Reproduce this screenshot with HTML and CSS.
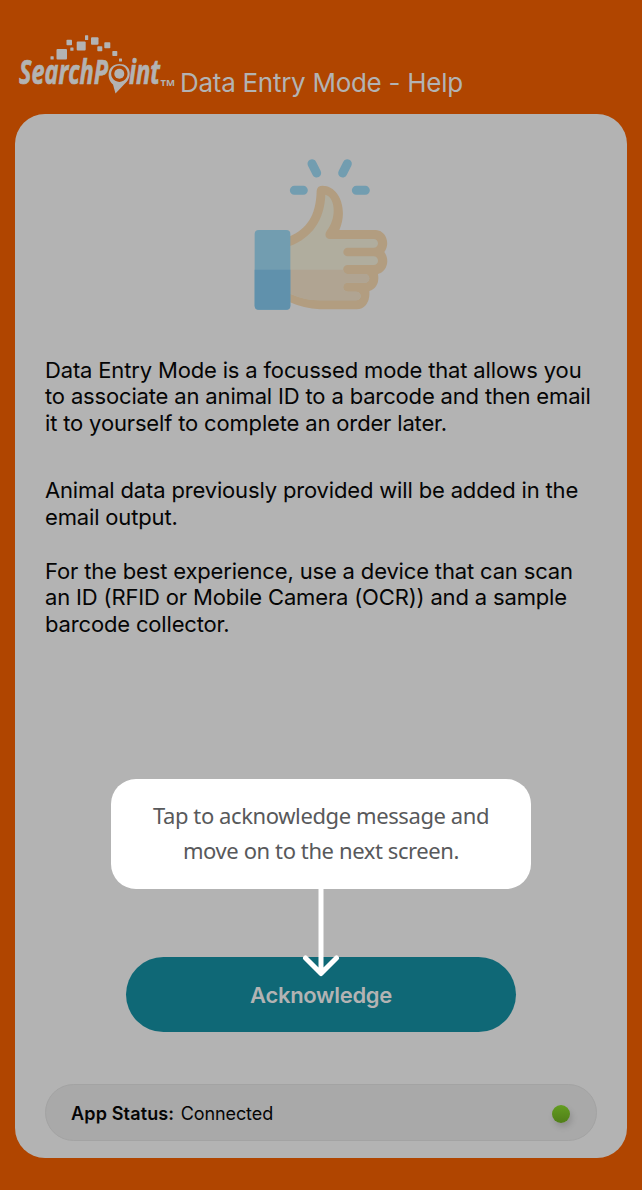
FILE: index.html
```html
<!DOCTYPE html>
<html lang="en">
<head>
<meta charset="utf-8">
<title>Data Entry Mode - Help</title>
<link rel="stylesheet" href="styles.css">
</head>
<body>
<div class="screen">
  <header class="header">
    <svg class="logo" viewBox="0 0 168 70" role="img" aria-label="SearchPoint">
      <g fill="#b3b3b3">
        <rect x="42.500" y="19" width="10.500" height="10.500" rx="1"/>
        <rect x="36.500" y="26.300" width="3.200" height="3.200" rx=".5"/>
        <rect x="52.500" y="9.700" width="5.500" height="5.500" rx=".8"/>
        <rect x="56.300" y="17.500" width="3.200" height="3.200" rx=".5"/>
        <rect x="62.700" y="11.500" width="9" height="9" rx="1"/>
        <rect x="71" y="5.300" width="3.200" height="4.600" rx=".5"/>
        <rect x="77" y="7.300" width="7.500" height="7.500" rx="1"/>
        <rect x="83.300" y="16.300" width="5" height="5" rx=".8"/>
        <rect x="90.300" y="12.300" width="6" height="6" rx=".8"/>
        <rect x="98.300" y="21" width="5" height="5" rx=".8"/>
        <rect x="105" y="28.500" width="3" height="3" rx=".5"/>
        <text class="logo-word" x="5" y="53.500" textLength="89" lengthAdjust="spacingAndGlyphs">SearchP</text>
        <text class="logo-word" x="115" y="53.500" textLength="31" lengthAdjust="spacingAndGlyphs">int</text>
        <text class="logo-tm" x="146.500" y="55.500" textLength="14.500" lengthAdjust="spacingAndGlyphs">TM</text>
        <circle cx="105.300" cy="43.700" r="5"/>
        <path fill-rule="evenodd" d="M101.500 63.500L99 54.500C92 49 93 34 105.300 34C118 34 118.500 48 110.500 54ZM105.300 35.500a8.200 8.200 0 1 0 .1 0Z"/>
      </g>
    </svg>
    <h1 class="title">Data Entry Mode - Help</h1>
  </header>
  <main class="card">
    <svg class="thumb" viewBox="0 0 480 525" aria-hidden="true">
      <g stroke="#729db0" stroke-width="27" stroke-linecap="round">
        <path d="M216 56L230 84M322 56L308 84M163 136H190M349 136H376"/>
      </g>
      <path fill="#b29d80" d="M150 274C200 250 228 215 230 138Q231 122 248 122C296 122 326 190 298 255H408C438 257 452 295 433 321C451 346 440 381 414 387C418 412 410 430 388 438C391 470 375 493 350 493H240Q190 490 150 472Z"/>
      <path fill="#b0ad9e" d="M150 303C216 278 253 225 256 149C284 155 293 215 260 258C252 270 258 282 270 282H401a13 13 0 0 1 0 26H323a13 13 0 0 0 0 26H401a13 13 0 0 1 0 26H323a13 13 0 0 0 0 27H375a13 13 0 0 1 0 26H323a13 13 0 0 0 0 27H349a13 13 0 0 1 0 26H240Q195 466 150 446Z"/>
      <path fill="#b0a492" d="M150 374H310A13 13 0 0 0 323 387H375a13 13 0 0 1 0 26H323a13 13 0 0 0 0 27H349a13 13 0 0 1 0 26H240Q195 466 150 446Z"/>
      <rect x="44" y="255" width="107" height="239" rx="12" fill="#729db0"/>
      <path fill="#6091ac" d="M44 374H151V482Q151 494 139 494H56Q44 494 44 482Z"/>
    </svg>
    <div class="copy">
      <p class="para first">Data Entry Mode is a focussed mode that allows you<br>to associate an animal ID to a barcode and then email<br>it to yourself to complete an order later.</p>
      <p class="para">Animal data previously provided will be added in the<br>email output.</p>
      <p class="para">For the best experience, use a device that can scan<br>an ID (RFID or Mobile Camera (OCR)) and a sample<br>barcode collector.</p>
    </div>
    <div class="action">
      <button class="ack">Acknowledge</button>
      <div class="tip">
        <div class="bubble">Tap to acknowledge message and<br>move on to the next screen.</div>
        <svg class="arrow" viewBox="0 0 40 90" aria-hidden="true"><path d="M20 0V84M4.500 69L20 84.500L35.500 69" fill="none" stroke="#fff" stroke-width="5" stroke-linecap="round" stroke-linejoin="round"/></svg>
      </div>
    </div>
    <footer class="status"><b>App Status:</b><span class="state">Connected</span><i class="dot"></i></footer>
  </main>
</div>
</body>
</html>
```
FILE: styles.css
```css
* { box-sizing: border-box; }
body { margin: 0; background: #b04500; font-family: Inter, "Liberation Sans", sans-serif; color: #050505; }
.screen { width: 642px; height: 1190px; padding: 0 15px; display: flex; flex-direction: column; }
.header { height: 114px; display: flex; align-items: flex-start; }
.logo { width: 168px; height: 70px; margin: 30px 0 0 -1px; flex: none; }
.logo-word { font: italic 700 34px "Open Sans", sans-serif; stroke: #b3b3b3; stroke-width: .7px; }
.logo-tm { font: 700 9px "Open Sans", sans-serif; }
.title { margin: 66px 0 0 -2px; font-size: 26px; line-height: 34px; font-weight: 400; letter-spacing: -.28px; color: #b3b3b3; white-space: nowrap; }
.card { height: 1044px; background: #b3b3b3; border-radius: 30px; padding: 31px 30px 17px; display: flex; flex-direction: column; }
.thumb { display: block; width: 160px; height: 175px; margin-left: 195px; flex: none; }
.copy { margin-top: 36.600px; font-size: 22px; line-height: 26.800px; letter-spacing: -.16px; }
.para { margin: 0 0 27px; white-space: nowrap; }
.first { margin-bottom: 40px; }
.action { position: relative; margin: auto auto 52px; width: 390px; }
.ack { display: block; width: 390px; height: 75px; border: 0; border-radius: 38px; background: #0f6876; color: #b3b3b3; font: 600 22px Inter, sans-serif; letter-spacing: -.3px; padding: 0; }
.tip { position: absolute; left: -15px; bottom: 53px; width: 420px; display: flex; flex-direction: column; align-items: center; }
.bubble { width: 420px; height: 110px; border-radius: 25px; background: #fff; color: #58595b; font: 22px/35px "Noto Sans", sans-serif; letter-spacing: -.4px; padding-top: 19px; text-align: center; white-space: nowrap; }
.arrow { width: 40px; height: 90px; display: block; }
.status { height: 57px; border: 1px solid #a3a3a3; border-radius: 29px; background: #a9a9a9; display: flex; align-items: center; padding: 2px 26px 0 25px; font-size: 18px; flex: none; }
.status b { font-weight: 600; letter-spacing: .15px; }
.state { margin-left: 6.500px; letter-spacing: -.1px; }
.dot { width: 18px; height: 18px; margin-left: auto; border-radius: 50%; background: linear-gradient(#639d20, #507e18); box-shadow: 2px 4px 6px rgba(0,0,0,.15); }
```
